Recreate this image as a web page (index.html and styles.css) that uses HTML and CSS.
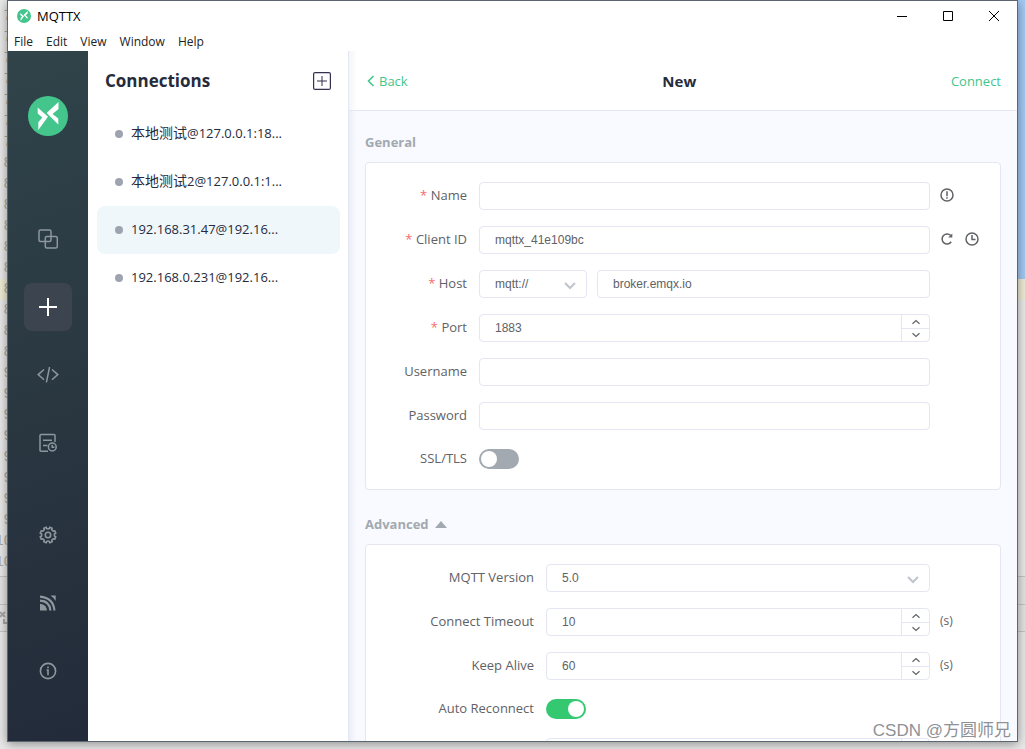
FILE: index.html
```html
<!DOCTYPE html>
<html lang="en">
<head>
<meta charset="utf-8">
<title>MQTTX</title>
<link rel="stylesheet" href="styles.css">
</head>
<body>
<svg class="defs" aria-hidden="true">
  <symbol id="logo" viewBox="0 0 40 40">
    <circle cx="20" cy="20" r="20" fill="#43c58b"/>
    <path fill="#fff" d="M9.7 11.5V17.5L14.3 21.6 10.3 26.3V34L20 20.8ZM30.5 6V13L24.6 18 30.3 22.6V28.4L18.6 17Z"/>
  </symbol>
  <symbol id="chev" viewBox="0 0 14 14"><path d="M2 5 7 10 12 5" fill="none" stroke="currentColor" stroke-width="2"/></symbol>
  <symbol id="up" viewBox="0 0 10 6"><path d="M1.5 4.8 5 1.6 8.5 4.8" fill="none" stroke="currentColor" stroke-width="1.2"/></symbol>
  <symbol id="down" viewBox="0 0 10 6"><path d="M1.5 1.2 5 4.4 8.5 1.2" fill="none" stroke="currentColor" stroke-width="1.2"/></symbol>
</svg>

<div class="backdrop" aria-hidden="true">
  <div class="backdrop-left">
    <ol class="gutter">
      <li>7</li><li>7</li><li>7</li><li>7</li><li>7</li><li>7</li><li>7</li>
      <li>8</li><li>8</li><li>8</li><li>8</li><li>8</li><li>8</li><li class="current">8</li><li>8</li><li>8</li><li>8</li>
      <li>9</li><li>9</li><li>9</li><li>9</li><li>9</li><li>9</li><li>9</li><li>9</li>
      <li>10</li><li>10</li>
    </ol>
    <div class="panel-bar"></div>
    <div class="panel-bar second"><svg width="8" height="14" viewBox="0 0 8 14" fill="none" stroke="#a8a8a8" stroke-width="2"><path d="M0 1 5 6M5 1 0 6M4 8V12H8"/></svg></div>
  </div>
  <div class="backdrop-right">
    <div class="blue"></div>
    <div class="current"></div>
    <div class="grey"></div>
    <div class="panel-bar"></div>
    <div class="panel-bar second"></div>
  </div>
</div>

<div class="window">
  <header class="titlebar">
    <svg class="app-icon" width="14" height="14"><use href="#logo"/></svg>
    <span class="app-name">MQTTX</span>
    <div class="window-buttons">
      <button type="button" aria-label="Minimize"><svg width="12" height="12" viewBox="0 0 12 12" stroke="#000" fill="none" shape-rendering="crispEdges"><path d="M1 6.5H11"/></svg></button>
      <button type="button" aria-label="Maximize"><svg width="12" height="12" viewBox="0 0 12 12" stroke="#000" fill="none"><path d="M1.5 1.5H10.5V10.5H1.5Z"/></svg></button>
      <button type="button" aria-label="Close"><svg width="12" height="12" viewBox="0 0 12 12" stroke="#000" fill="none"><path d="M1 1 11 11M11 1 1 11"/></svg></button>
    </div>
  </header>
  <nav class="menubar" aria-label="Menu">
    <button type="button">File</button><button type="button">Edit</button><button type="button">View</button><button type="button">Window</button><button type="button">Help</button>
  </nav>

  <div class="app">
    <aside class="sidebar">
      <svg class="logo" width="40" height="40"><use href="#logo"/></svg>
      <nav class="side-nav" aria-label="Main">
        <a href="#connections" aria-label="Connections"><svg width="20" height="20" viewBox="0 0 20 20" fill="none" stroke="currentColor" stroke-width="1.5"><rect x="1" y="1" width="12" height="11.5" rx="1.5"/><rect x="7.3" y="7.5" width="12" height="11.5" rx="1.5"/></svg></a>
        <a href="#new" class="active" aria-label="New connection"><svg width="20" height="20" viewBox="0 0 20 20" fill="none" stroke="currentColor" stroke-width="2"><path d="M10 1V19M1 10H19"/></svg></a>
        <a href="#script" aria-label="Script"><svg width="22" height="18" viewBox="0 0 22 18" fill="none" stroke="currentColor" stroke-width="1.5"><path d="M7 3.5 1.2 8.6 7 13.8M15 3.5 20.8 8.6 15 13.8M12.6 1 9.4 16.3"/></svg></a>
        <a href="#log" aria-label="Log"><svg width="20" height="20" viewBox="0 0 20 20" fill="none" stroke="currentColor" stroke-width="1.5"><path d="M17 9V2.5Q17 1.5 16 1.5H3Q2 1.5 2 2.5V17.3Q2 18.3 3 18.3H10M5 7.3H14M5 12.5H9.5"/><circle cx="14.3" cy="14" r="3.9"/><path d="M14.2 11.7V14.3H16.5"/></svg></a>
      </nav>
      <nav class="side-nav bottom" aria-label="Tools">
        <a href="#settings" aria-label="Settings"><svg width="18" height="18" viewBox="0 0 18 18" fill="none" stroke="currentColor" stroke-width="1.6" stroke-linejoin="round"><path d="M7.2 1.2 7.8 2.7H10.2L10.8 1.2 13.2 2.2 12.7 3.8 14.2 5.3 15.8 4.8 16.8 7.2 15.4 7.9V10.1L16.8 10.8 15.8 13.2 14.2 12.7 12.7 14.2 13.2 15.8 10.8 16.8 10.2 15.3H7.8L7.2 16.8 4.8 15.8 5.3 14.2 3.8 12.7 2.2 13.2 1.2 10.8 2.6 10.1V7.9L1.2 7.2 2.2 4.8 3.8 5.3 5.3 3.8 4.8 2.2Z"/><circle cx="9" cy="9" r="2.7"/></svg></a>
        <a href="#subscribe" aria-label="Feed"><svg width="18" height="18" viewBox="0 0 18 18" fill="none" stroke="currentColor" stroke-width="2.2"><path d="M1 16.5V9.7Q7.5 10.5 8 16.5Z" fill="currentColor" stroke="none"/><path d="M1 6.6Q10.8 7 11.4 16.5M1 2.7Q14.5 4 15.4 16.5"/><path d="M11.5 1.5H16.7V7Q15 4 11.5 1.5Z" fill="currentColor" stroke="none"/></svg></a>
        <a href="#about" aria-label="About"><svg width="18" height="18" viewBox="0 0 18 18" fill="none" stroke="currentColor" stroke-width="1.6"><circle cx="9" cy="9" r="7.6"/><path d="M7.6 8H9V13.2M9 4.6V6.2"/></svg></a>
      </nav>
    </aside>

    <section class="connections">
      <div class="connections-head">
        <h1>Connections</h1>
        <button type="button" aria-label="Add connection"><svg width="18" height="18" viewBox="0 0 18 18" fill="none" stroke="#35304f"><rect x=".6" y=".6" width="16.8" height="16.8" rx="1.5" stroke-width="1.2"/><path d="M9 4V14M4 9H14"/></svg></button>
      </div>
      <ul>
        <li><a href="#c1"><span><span lang="zh">本地测试</span>@127.0.0.1:18...</span></a></li>
        <li><a href="#c2"><span><span lang="zh">本地测试</span>2@127.0.0.1:1...</span></a></li>
        <li><a href="#c3" class="selected"><span>192.168.31.47@192.16...</span></a></li>
        <li><a href="#c4"><span>192.168.0.231@192.16...</span></a></li>
      </ul>
    </section>

    <main class="editor">
      <header class="editor-head">
        <a href="#back" class="back"><svg width="10" height="12" viewBox="0 0 10 12" fill="none" stroke="currentColor" stroke-width="1.6"><path d="M8.5 1 3.5 6 8.5 11"/></svg>Back</a>
        <h2>New</h2>
        <a href="#connect">Connect</a>
      </header>
      <form class="form">
        <h3>General</h3>
        <div class="card general">
          <div class="row">
            <label class="required" for="name">Name</label>
            <input id="name" type="text">
            <div class="extra"><svg width="14" height="14" viewBox="0 0 14 14" fill="none" stroke="currentColor" stroke-width="1.5"><circle cx="7" cy="7" r="6"/><path d="M7 3.3V8.3M7 9.3V10.8"/></svg></div>
          </div>
          <div class="row">
            <label class="required" for="client">Client ID</label>
            <input id="client" type="text" value="mqttx_41e109bc">
            <div class="extra">
              <button type="button" aria-label="Refresh"><svg width="14" height="14" viewBox="0 0 14 14" fill="none" stroke="currentColor" stroke-width="1.5"><path d="M11.2 9.8A5 5 0 1 1 10.8 3.6"/><path d="M12.3 1.5V5.6H8.2Z" fill="currentColor" stroke="none"/></svg></button>
              <button type="button" aria-label="Add timestamp"><svg width="14" height="14" viewBox="0 0 14 14" fill="none" stroke="currentColor" stroke-width="1.5"><circle cx="7" cy="7" r="6"/><path d="M7 3V7.4H10.5"/></svg></button>
            </div>
          </div>
          <div class="row">
            <label class="required" for="host">Host</label>
            <div class="host">
              <div class="select"><select aria-label="Protocol"><option>mqtt://</option></select><svg width="14" height="14"><use href="#chev"/></svg></div>
              <input id="host" type="text" value="broker.emqx.io">
            </div>
          </div>
          <div class="row">
            <label class="required" for="port">Port</label>
            <div class="number"><input id="port" type="number" value="1883"><div class="steps"><button type="button" aria-label="Increase"><svg width="10" height="6"><use href="#up"/></svg></button><button type="button" aria-label="Decrease"><svg width="10" height="6"><use href="#down"/></svg></button></div></div>
          </div>
          <div class="row">
            <label for="user">Username</label>
            <input id="user" type="text">
          </div>
          <div class="row">
            <label for="pass">Password</label>
            <input id="pass" type="password">
          </div>
          <div class="row switch-row">
            <label for="tls">SSL/TLS</label>
            <input id="tls" class="switch" type="checkbox">
          </div>
        </div>

        <h3>Advanced <svg width="12" height="7" viewBox="0 0 12 7" fill="currentColor"><path d="M0 7 6 0 12 7Z"/></svg></h3>
        <div class="card advanced">
          <div class="row">
            <label for="version">MQTT Version</label>
            <div class="select"><select id="version"><option>5.0</option></select><svg width="14" height="14"><use href="#chev"/></svg></div>
          </div>
          <div class="row">
            <label for="timeout">Connect Timeout</label>
            <div class="number"><input id="timeout" type="number" value="10"><div class="steps"><button type="button" aria-label="Increase"><svg width="10" height="6"><use href="#up"/></svg></button><button type="button" aria-label="Decrease"><svg width="10" height="6"><use href="#down"/></svg></button></div></div>
            <div class="extra">(s)</div>
          </div>
          <div class="row">
            <label for="alive">Keep Alive</label>
            <div class="number"><input id="alive" type="number" value="60"><div class="steps"><button type="button" aria-label="Increase"><svg width="10" height="6"><use href="#up"/></svg></button><button type="button" aria-label="Decrease"><svg width="10" height="6"><use href="#down"/></svg></button></div></div>
            <div class="extra">(s)</div>
          </div>
          <div class="row switch-row">
            <label for="reconnect">Auto Reconnect</label>
            <input id="reconnect" class="switch" type="checkbox" checked>
          </div>
          <div class="row">
            <span></span>
            <div class="number"><input type="number" aria-label="Reconnect period"><div class="steps"><button type="button" aria-label="Increase"></button><button type="button" aria-label="Decrease"></button></div></div>
          </div>
        </div>
      </form>
    </main>
  </div>
</div>
<div class="watermark">CSDN @方圆师兄</div>
</body>
</html>
```

FILE: styles.css
```css
* { box-sizing: border-box; }
body {
  margin: 0;
  height: 100vh;
  overflow: hidden;
  position: relative;
  background: #e8e8e8;
  color: #606266;
  font: 13px/20px "Open Sans", "Noto Sans CJK SC", sans-serif;
}
h1, h2, h3, ul, ol { margin: 0; padding: 0; list-style: none; }
svg { display: block; flex: none; }
button { border: 0; padding: 0; background: none; color: inherit; font: inherit; }
a { color: inherit; text-decoration: none; }
.defs { position: absolute; width: 0; height: 0; }

/* desktop behind the window */
.backdrop {
  position: absolute;
  inset: 0;
  display: flex;
  justify-content: space-between;
  background: #e9e9e9;
}
.backdrop-left, .backdrop-right { display: flex; flex-direction: column; width: 12px; }
.gutter {
  padding-top: 6px;
  color: #a9a9a0;
  font: 14px/21px "Liberation Mono", monospace;
}
.gutter li { display: flex; justify-content: flex-end; }
.current { background: #efecd6; }
.backdrop-right .blue { height: 279px; background: #a3caf5; }
.backdrop-right .current { height: 21px; }
.backdrop-right .grey { height: 276px; background: #ebebeb; }
.panel-bar { height: 28px; border-top: 1px solid #c4c4c4; background: #e4e4e4; }
.backdrop-left .panel-bar { margin-top: 3px; }
.panel-bar.second, .backdrop-left .panel-bar.second { margin-top: 0; padding-top: 6px; border-bottom: 1px solid #c4c4c4; }

/* window frame */
.window {
  position: relative;
  display: flex;
  flex-direction: column;
  height: calc(100vh - 7px);
  margin: 0 7px;
  border: 1px solid #5c6670;
  background: #fff;
  box-shadow: 0 2px 10px rgba(0, 0, 0, .4);
}
.titlebar { display: flex; align-items: center; height: 30px; padding-left: 9px; color: #000; }
.app-name { margin-left: 6px; }
.window-buttons { display: flex; margin-left: auto; }
.window-buttons button { display: grid; place-items: center; width: 46px; height: 28px; }
.menubar { display: flex; gap: 13px; height: 20px; padding-left: 6px; color: #222; font-size: 12px; line-height: 22px; }
.app { display: flex; flex: 1; min-height: 0; }

/* icon rail */
.sidebar {
  display: flex;
  flex-direction: column;
  align-items: center;
  width: 80px;
  padding: 45px 0 46px;
  background: linear-gradient(160deg, #30444a, #293640 55%, #232b3a);
  color: #8d979e;
}
.side-nav { display: flex; flex-direction: column; gap: 20px; margin-top: 79px; }
.side-nav.bottom { margin-top: auto; }
.side-nav a { display: grid; place-items: center; width: 48px; height: 48px; border-radius: 8px; }
.side-nav .active { background: #3b444f; color: #fff; }

/* connection list */
.connections { width: 260px; color: #262b3c; }
.connections-head { display: flex; align-items: center; justify-content: space-between; height: 59px; padding: 0 17px; }
.connections h1 { font-size: 17px; }
.connections ul { padding: 0 8px 0 9px; }
.connections li a {
  display: flex;
  align-items: center;
  gap: 8px;
  height: 48px;
  padding: 0 18px;
  border-radius: 8px;
  font-weight: 500;
  white-space: nowrap;
}
.connections li a::before { content: ""; width: 8px; height: 8px; border-radius: 50%; background: #9ea3b0; }
.connections li a > span { padding-bottom: 2px; }
.connections [lang="zh"] { font-size: 14px; font-weight: 400; }
.connections .selected { background: #eff7fb; }

/* editor */
.editor {
  display: flex;
  flex-direction: column;
  flex: 1;
  min-width: 0;
  border-left: 1px solid #e6e8f1;
  background: #f8faff;
  box-shadow: inset 6px 0 6px -4px #e6e8f1;
}
.editor-head {
  display: flex;
  align-items: center;
  justify-content: space-between;
  height: 60px;
  padding: 0 16px;
  border-bottom: 1px solid #e6e8f1;
  background: linear-gradient(90deg, #f3f5f9, #fff 8px);
  color: #43c58b;
}
.editor-head h2 { color: #262b3c; font-size: 15px; }
.back { display: flex; align-items: center; gap: 4px; }
.form { flex: 1; min-height: 0; overflow: hidden; padding: 21px 16px 0; }
.form h3 { display: flex; align-items: center; gap: 6px; margin-bottom: 10px; color: #a2a9b0; font-size: 13px; }
.card {
  display: grid;
  gap: 16px;
  margin-bottom: 24px;
  padding: 19px 0 17px;
  border: 1px solid #e4e6f1;
  border-radius: 4px;
  background: #fff;
}
.row { display: grid; align-items: center; min-height: 28px; }
.general .row { grid-template-columns: 113px 1fr 70px; }
.advanced .row { grid-template-columns: 180px 1fr 70px; }
.general .switch-row, .advanced .switch-row { min-height: 26px; }
.row label { padding: 0 12px 2px 0; text-align: right; }
.required::before { content: "* "; color: #f56c6c; }
input, select {
  width: 100%;
  height: 28px;
  margin: 0;
  padding: 0 15px;
  border: 1px solid #e4e6f1;
  border-radius: 4px;
  background: #fff;
  color: #606266;
  font: 12px/26px "Liberation Sans", Arial, sans-serif;
  appearance: none;
}
input[type="number"] { appearance: textfield; }
input::-webkit-inner-spin-button { appearance: none; }
.extra { display: flex; gap: 11px; padding: 0 0 2px 10px; font-size: 12px; }
.host { display: grid; grid-template-columns: 108px 1fr; gap: 10px; }
.select, .number { position: relative; }
.select svg { position: absolute; right: 10px; top: 8px; color: #c0c4cc; pointer-events: none; }
.number input { display: block; }
.steps {
  position: absolute;
  top: 1px;
  right: 1px;
  bottom: 1px;
  display: grid;
  grid-template-rows: 1fr 1fr;
  width: 28px;
  border-left: 1px solid #e4e6f1;
}
.steps button { display: grid; place-items: center; }
.steps button + button { border-top: 1px solid #e4e6f1; }
.switch {
  width: 40px;
  height: 20px;
  padding: 2px;
  border: 0;
  border-radius: 10px;
  background: #a2a9b0;
}
.switch::before { content: ""; display: block; width: 16px; height: 16px; border-radius: 50%; background: #fff; }
.switch:checked { background: #34c971; }
.switch:checked::before { margin-left: auto; }

.watermark {
  position: absolute;
  right: 14px;
  bottom: 6px;
  color: #8f9195;
  font: 17px/24px "Liberation Sans", "Noto Sans CJK SC", sans-serif;
  text-shadow: 1px 1px 0 #fff;
}
```
